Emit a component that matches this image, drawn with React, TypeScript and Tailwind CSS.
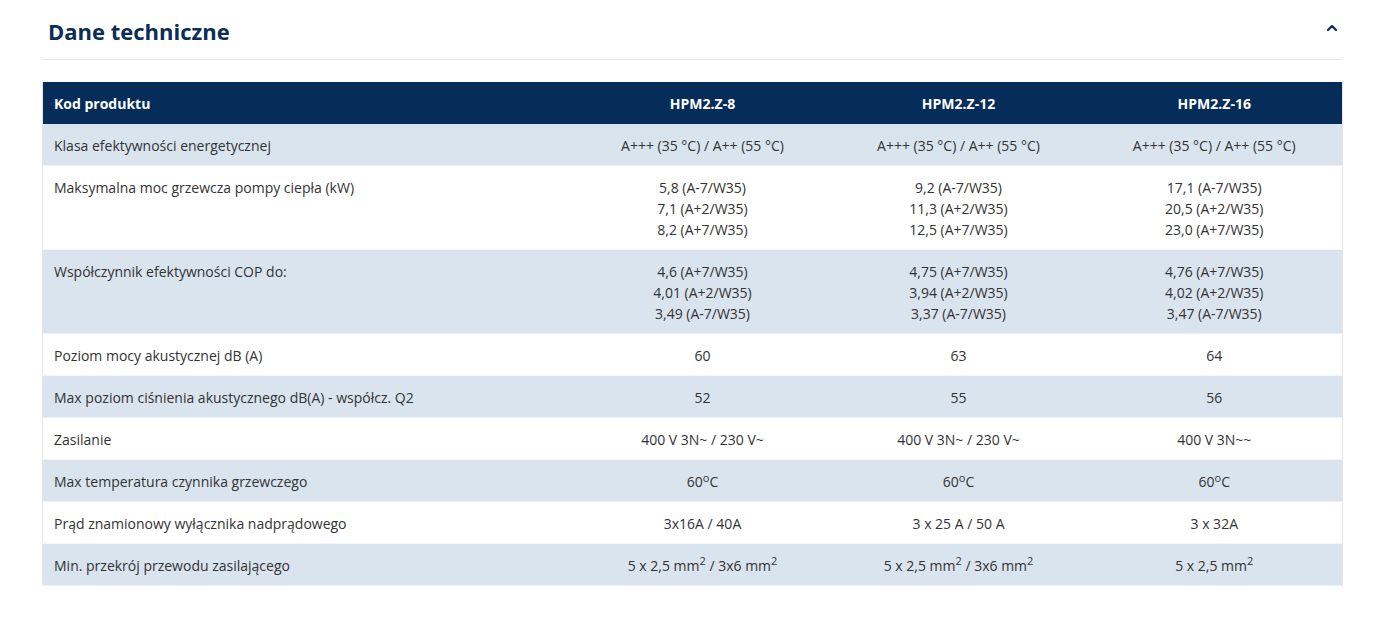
import { ChevronUp } from "lucide-react";

interface Row {
  label: string;
  values: React.ReactNode[];
}

const sq = <sup className="text-[11px] align-baseline relative -top-[6px]">2</sup>;
const deg = <sup className="text-[11px] align-baseline relative -top-[5px]">o</sup>;

const rows: Row[] = [
  {
    label: "Klasa efektywności energetycznej",
    values: [
      "A+++ (35 °C) / A++ (55 °C)",
      "A+++ (35 °C) / A++ (55 °C)",
      "A+++ (35 °C) / A++ (55 °C)",
    ],
  },
  {
    label: "Maksymalna moc grzewcza pompy ciepła (kW)",
    values: [
      <>5,8 (A-7/W35)<br />7,1 (A+2/W35)<br />8,2 (A+7/W35)</>,
      <>9,2 (A-7/W35)<br />11,3 (A+2/W35)<br />12,5 (A+7/W35)</>,
      <>17,1 (A-7/W35)<br />20,5 (A+2/W35)<br />23,0 (A+7/W35)</>,
    ],
  },
  {
    label: "Współczynnik efektywności COP do:",
    values: [
      <>4,6 (A+7/W35)<br />4,01 (A+2/W35)<br />3,49 (A-7/W35)</>,
      <>4,75 (A+7/W35)<br />3,94 (A+2/W35)<br />3,37 (A-7/W35)</>,
      <>4,76 (A+7/W35)<br />4,02 (A+2/W35)<br />3,47 (A-7/W35)</>,
    ],
  },
  { label: "Poziom mocy akustycznej dB (A)", values: ["60", "63", "64"] },
  {
    label: "Max poziom ciśnienia akustycznego dB(A) - współcz. Q2",
    values: ["52", "55", "56"],
  },
  {
    label: "Zasilanie",
    values: ["400 V 3N~ / 230 V~", "400 V 3N~ / 230 V~", "400 V 3N~~"],
  },
  {
    label: "Max temperatura czynnika grzewczego",
    values: [<>60{deg}C</>, <>60{deg}C</>, <>60{deg}C</>],
  },
  {
    label: "Prąd znamionowy wyłącznika nadprądowego",
    values: ["3x16A / 40A", "3 x 25 A / 50 A", "3 x 32A"],
  },
  {
    label: "Min. przekrój przewodu zasilającego",
    values: [
      <>5 x 2,5 mm{sq} / 3x6 mm{sq}</>,
      <>5 x 2,5 mm{sq} / 3x6 mm{sq}</>,
      <>5 x 2,5 mm{sq}</>,
    ],
  },
];

export default function App() {
  return (
    <div className="min-h-screen bg-white font-['Open_Sans',sans-serif] text-[#333]">
      <div className="mx-[42px] w-[1300px]">
        {/* Header */}
        <div className="flex items-center justify-between h-[60px] border-b border-[#e6e6e6] pl-[6px] pr-[2px]">
          <h2 className="text-[22px] font-bold text-[#0b2d57] leading-none pt-[2px]">Dane techniczne</h2>
          <ChevronUp className="w-[16px] h-[16px] text-[#0b2d57] mb-[4px]" strokeWidth={3.5} />
        </div>

        <table className="mt-[22px] w-full table-fixed border-collapse border-x border-[#e5e5e5] text-[14px] leading-[21px]">
          <colgroup>
            <col className="w-[532px]" />
            <col className="w-[256px]" />
            <col className="w-[256px]" />
            <col className="w-[256px]" />
          </colgroup>
          <thead>
            <tr className="bg-[#062d59] text-white font-bold">
              <th className="text-left pl-[11px] pt-[11px] pb-[10px]">Kod produktu</th>
              <th className="text-center pt-[11px] pb-[10px]">HPM2.Z-8</th>
              <th className="text-center pt-[11px] pb-[10px]">HPM2.Z-12</th>
              <th className="text-center pt-[11px] pb-[10px]">HPM2.Z-16</th>
            </tr>
          </thead>
          <tbody>
            {rows.map((row, i) => (
              <tr
                key={row.label}
                className={i % 2 === 0 ? "bg-[#d9e4ef] border-b border-[#eef2f7]" : "bg-white border-b border-[#f4f6f9]"}
              >
                <td className="align-top text-left pl-[11px] pt-[11px] pb-[9px]">{row.label}</td>
                {row.values.map((v, j) => (
                  <td key={j} className="align-top text-center pt-[11px] pb-[9px]">
                    {v}
                  </td>
                ))}
              </tr>
            ))}
          </tbody>
        </table>
      </div>
    </div>
  );
}
